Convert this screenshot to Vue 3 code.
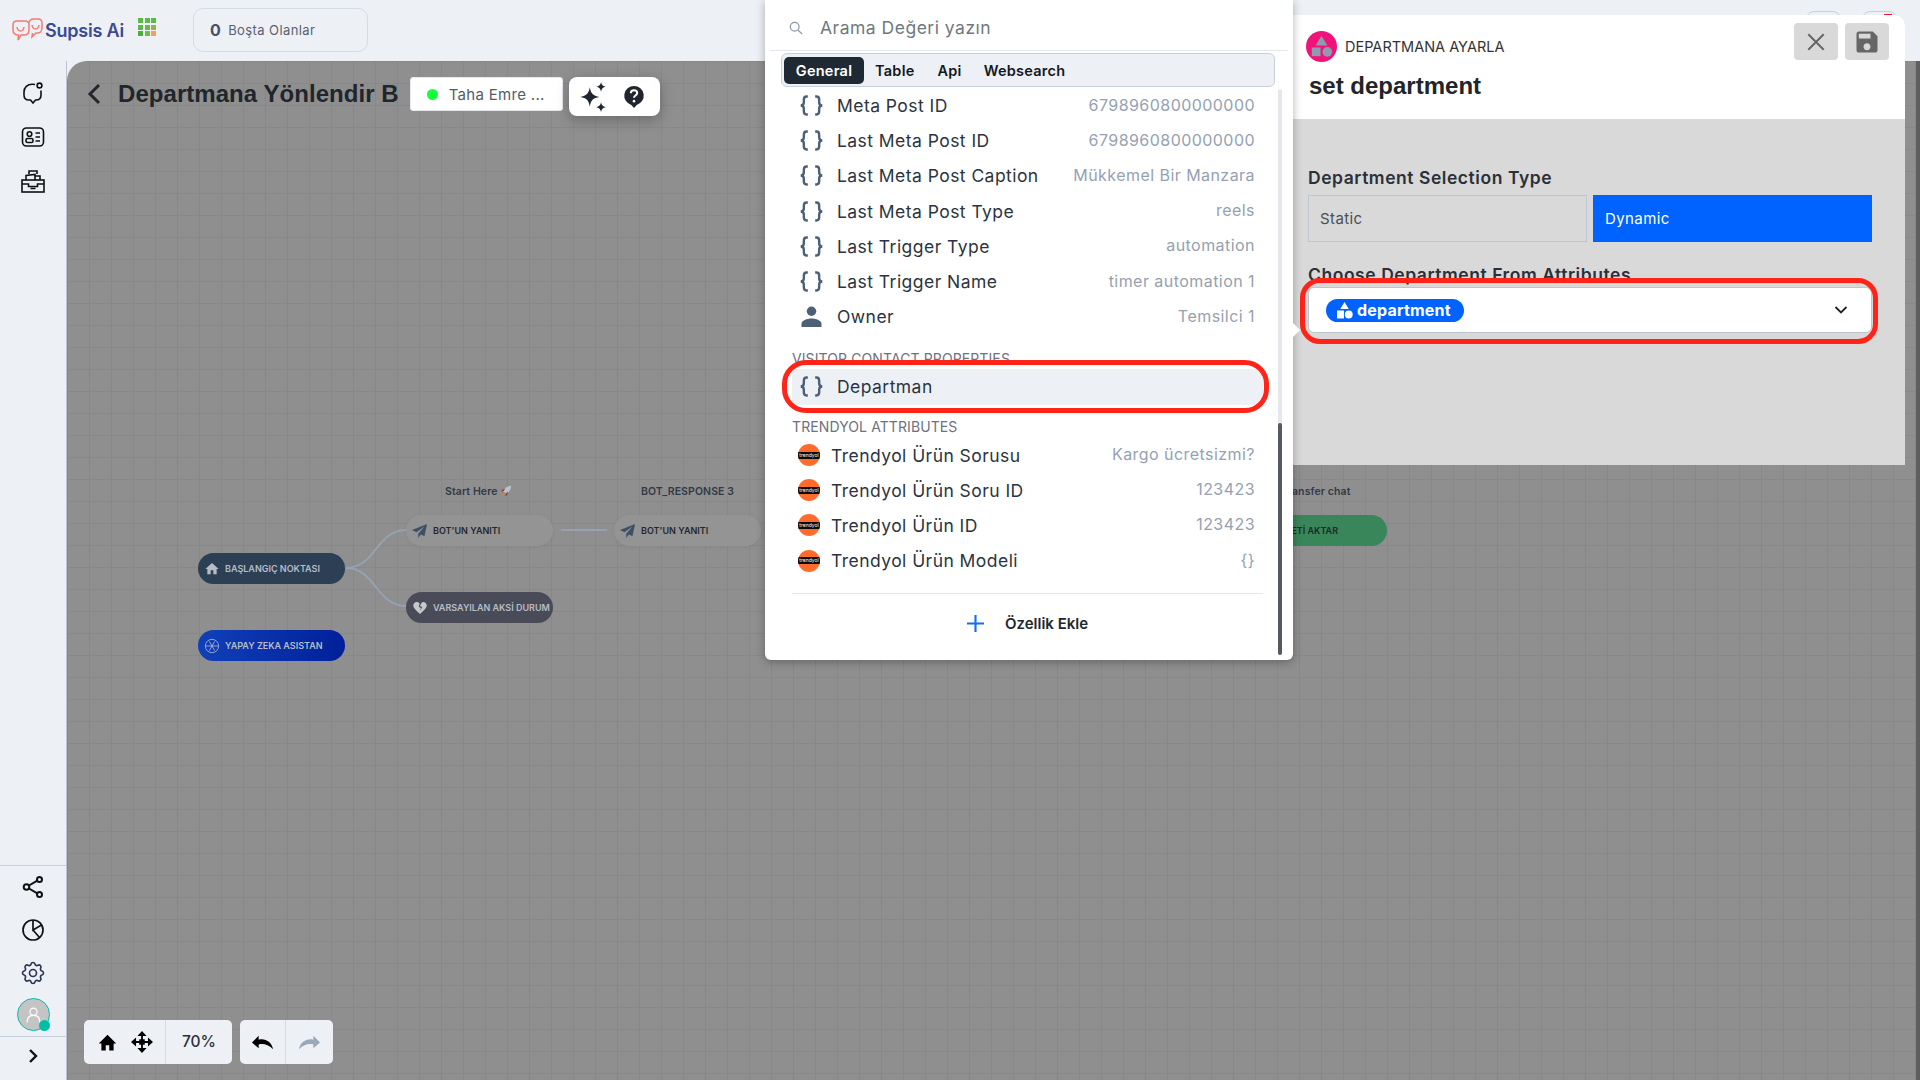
<script setup>
const generalRows = [
  { label: 'Meta Post ID', value: '6798960800000000', icon: 'brace' },
  { label: 'Last Meta Post ID', value: '6798960800000000', icon: 'brace' },
  { label: 'Last Meta Post Caption', value: 'Mükkemel Bir Manzara', icon: 'brace' },
  { label: 'Last Meta Post Type', value: 'reels', icon: 'brace' },
  { label: 'Last Trigger Type', value: 'automation', icon: 'brace' },
  { label: 'Last Trigger Name', value: 'timer automation 1', icon: 'brace' },
  { label: 'Owner', value: 'Temsilci 1', icon: 'person' }
]

const trendyolRows = [
  { label: 'Trendyol Ürün Sorusu', value: 'Kargo ücretsizmi?' },
  { label: 'Trendyol Ürün Soru ID', value: '123423' },
  { label: 'Trendyol Ürün ID', value: '123423' },
  { label: 'Trendyol Ürün Modeli', value: '{}' }
]

const tabs = ['General', 'Table', 'Api', 'Websearch']
const gridColors = ['#5cb848', '#5cb848', '#5cb848', '#5cb848', '#6fb548', '#a8a850', '#4caf3c', '#7fb24a', '#f0a060']
const bracePath = 'M8 1.5H6.800C4.800 1.500 4.200 2.700 4.200 4.500V7c0 1.800-1 3-3 3 2 0 3 1.200 3 3v2.500c0 1.800.6 3 2.600 3H8M15 1.500h1.200c2 0 2.600 1.200 2.600 3V7c0 1.800 1 3 3 3-2 0-3 1.200-3 3v2.500c0 1.800-.6 3-2.600 3H15'
</script>

<template>
  <div class="page">
    <header class="topbar">
      <div class="logo">
        <svg class="logo-mark" viewBox="0 0 31 24" fill="none" stroke="#f57b6f" stroke-width="1.500">
          <path d="M5 3h8c3 0 4 2 4 4v5c0 3-2 5-5 5H9l-3 5 .5-5C3 17 1 15 1 12V7c0-2 1-4 4-4z" />
          <path d="M17 5c0-2 2-4 4-4h5c3 0 4 2 4 4v5c0 3-2 5-4.500 5H24l-4 4 .5-4" />
          <path d="M5 9c.5 3 2 4 3.500 4s3-1 3.500-4M20 7c.5 3 2 4 3.500 4s3-1 3.500-4" />
        </svg>
        <span class="logo-text">Supsis Ai</span>
        <div class="logo-grid">
          <i v-for="(c, i) in gridColors" :key="i" :style="{ background: c }"></i>
        </div>
      </div>
      <div class="idle-box"><b>0</b><span>Boşta Olanlar</span></div>
      <div class="top-right">
        <span class="peek"></span>
        <span class="peek"><i></i></span>
      </div>
    </header>

    <div class="main">
      <aside class="sidebar">
        <div class="side-group">
          <svg class="side-icon" viewBox="0 0 24 24" fill="none" stroke="#111" stroke-width="1.600">
            <path d="M14 3.500c-1-.3-1.500-.3-3-.3C6.500 3.200 3 6.500 3 11v3c0 3 2 5 5 5h1.500l2.500 3 2.500-3h.5c3 0 5-2 5-5V9.500" />
            <circle cx="18.500" cy="4.500" r="2.400" />
          </svg>
          <svg class="side-icon" viewBox="0 0 24 24" fill="none" stroke="#111" stroke-width="1.600">
            <rect x="1.500" y="3" width="21" height="18" rx="4" />
            <circle cx="8.500" cy="9" r="2.300" />
            <rect x="5" y="13.500" width="7" height="4" rx="1.500" />
            <path d="M14.500 8h4.500M14.500 12h4.500M14.500 16h4.500" />
          </svg>
          <svg class="side-icon" viewBox="0 0 24 24" fill="none" stroke="#111" stroke-width="1.600">
            <rect x="1" y="11" width="22" height="12" />
            <path d="M1 15h6.500v2.500h9V15H23M9.500 19.500h5" />
            <path d="M5 11V6.500l9-1V11M8 5V2h8v3M14 7h5v4" />
          </svg>
        </div>
        <div class="side-bottom">
          <div class="side-tools">
            <svg class="side-icon" viewBox="0 0 24 24" fill="none" stroke="#111" stroke-width="2">
              <circle cx="5.500" cy="12" r="2.800" />
              <circle cx="18.500" cy="4.500" r="2.500" />
              <circle cx="18.500" cy="19.500" r="2.500" />
              <path d="M8 10.500l8.300-4.800M8 13.500l8.300 4.800" />
            </svg>
            <svg class="side-icon" viewBox="0 0 24 24" fill="none" stroke="#111" stroke-width="1.700">
              <circle cx="12" cy="12" r="10" />
              <path d="M12 2v10l8.500-5M12 12l6.500 7.500" />
            </svg>
            <svg class="side-icon gear" viewBox="0 0 24 24" fill="none" stroke="#2b3553" stroke-width="1.400">
              <path d="M10.325 4.317c.426-1.756 2.924-1.756 3.350 0a1.724 1.724 0 002.573 1.066c1.543-.94 3.310.826 2.370 2.370a1.724 1.724 0 001.065 2.572c1.756.426 1.756 2.924 0 3.350a1.724 1.724 0 00-1.066 2.573c.94 1.543-.826 3.310-2.370 2.370a1.724 1.724 0 00-2.572 1.065c-.426 1.756-2.924 1.756-3.350 0a1.724 1.724 0 00-2.573-1.066c-1.543.94-3.310-.826-2.370-2.370a1.724 1.724 0 00-1.065-2.572c-1.756-.426-1.756-2.924 0-3.350a1.724 1.724 0 001.066-2.573c-.94-1.543.826-3.310 2.370-2.370.996.608 2.296.07 2.572-1.065z" />
              <circle cx="12" cy="12" r="3" />
            </svg>
            <div class="avatar">
              <svg viewBox="0 0 24 24" fill="none" stroke="#fff" stroke-width="1.500">
                <circle cx="12" cy="8.500" r="4.500" />
                <path d="M4 22c0-6 3-9 8-9s8 3 8 9" />
              </svg>
              <span class="avatar-dot"></span>
            </div>
          </div>
          <div class="side-expand">
            <svg viewBox="0 0 12 16" fill="none" stroke="#111" stroke-width="2.400"><path d="M3 2l6 6-6 6" /></svg>
          </div>
        </div>
      </aside>

      <section class="canvas">
        <svg class="links" viewBox="0 0 1853 1019" fill="none" stroke="#93a3b3" stroke-width="2">
          <path d="M279 507c30 0 30-38 60-38M279 507c30 0 30 38 60 38M494 469h46" />
        </svg>

        <div class="node-label label-start">Start Here
          <svg viewBox="0 0 14 14" class="rocket">
            <path d="M13 1C9 1 6 3 4 7l3 3c4-2 6-5 6-9z" fill="#b9c2cc" />
            <path d="M4 7L1 8l2-3h3zM7 10l-1 3 3-2V8z" fill="#a33" />
            <path d="M3 9l2 2-3 2z" fill="#c98a2a" />
          </svg>
        </div>
        <div class="node-label label-bot">BOT_RESPONSE 3</div>
        <div class="node-label label-transfer">transfer chat</div>

        <div class="node node-start">
          <svg viewBox="0 0 24 24" fill="#b8bdc5"><path d="M10 20v-6h4v6h5v-8h3L12 3 2 12h3v8z" /></svg>
          <span>BAŞLANGIÇ NOKTASI</span>
        </div>
        <div class="node node-ai">
          <svg viewBox="0 0 24 24" fill="none" stroke="#b4bcd8" stroke-width="1.200">
            <circle cx="12" cy="12" r="10" />
            <path d="M8 5l8 14M16 5L8 19M3 12h18" />
          </svg>
          <span>YAPAY ZEKA ASISTAN</span>
        </div>
        <div class="node node-bot bot-one">
          <svg viewBox="0 0 18 18" fill="#3f5064"><path d="M17 1L0 8l5 2.500L14 4l-7 8v5l3-4 4 2z" /></svg>
          <span>BOT'UN YANITI</span>
        </div>
        <div class="node node-bot bot-two">
          <svg viewBox="0 0 18 18" fill="#3f5064"><path d="M17 1L0 8l5 2.500L14 4l-7 8v5l3-4 4 2z" /></svg>
          <span>BOT'UN YANITI</span>
        </div>
        <div class="node node-default">
          <svg viewBox="0 0 24 24" fill="#c4c7cc"><path d="M12 21C5 15 2 12 2 8c0-3 2.500-5 5-5 2 0 3.500 1 4.500 2.500L10 10l3.500 2-2 5 4-6-3.500-2 1.500-3.500C14.500 4 15.500 3 17 3c2.500 0 5 2 5 5 0 4-3 7-10 13z" /></svg>
          <span>VARSAYILAN AKSİ DURUM</span>
        </div>
        <div class="node node-transfer"><span>SOHBETİ AKTAR</span></div>

        <div class="canvas-head">
          <svg class="back" viewBox="0 0 14 22" fill="none" stroke="#22272e" stroke-width="3"><path d="M12 2L3 11l9 9" /></svg>
          <h1>Departmana Yönlendir B</h1>
          <div class="status"><i></i><span>Taha Emre ...</span></div>
          <div class="actions">
            <svg viewBox="0 0 28 28" fill="#20262d" class="spark">
              <path d="M11 5c1 6 3 8 9 9-6 1-8 3-9 9-1-6-3-8-9-9 6-1 8-3 9-9z" />
              <path d="M21.500 0c.5 2.800 1.700 4 4.500 4.500-2.800.5-4 1.700-4.500 4.500-.5-2.800-1.700-4-4.500-4.500 2.800-.5 4-1.700 4.500-4.500zM21.500 19c.5 2.800 1.700 4 4.500 4.500-2.800.5-4 1.700-4.500 4.500-.5-2.800-1.700-4-4.500-4.500 2.800-.5 4-1.700 4.500-4.500z" />
            </svg>
            <svg viewBox="0 0 24 26" class="help">
              <path d="M12 1a10.500 10.500 0 00-3 20.600L12 25l3-3.400A10.500 10.500 0 0012 1z" fill="#20262d" />
              <path d="M8.500 9c0-2 1.500-3.300 3.500-3.300s3.500 1.300 3.500 3c0 2.500-3.500 2.800-3.500 5" fill="none" stroke="#fff" stroke-width="2.200" />
              <circle cx="12" cy="17.500" r="1.400" fill="#fff" />
            </svg>
          </div>
        </div>

        <div class="canvas-tools">
          <div class="tool-group">
            <div class="tool-icons">
              <svg viewBox="0 0 24 24" fill="#000" class="t-home"><path d="M10 21v-6h4v6h5v-8h3L12 3 2 13h3v8z" /></svg>
              <svg viewBox="0 0 24 24" fill="#000" class="t-move">
                <path d="M12 0l5 5.500H7zM12 24l-5-5.500h10zM0 12l5.500-5v10zM24 12l-5.500 5V7z" />
                <rect x="9" y="9" width="6" height="6" />
                <path d="M11 5h2v14h-2zM5 11h14v2H5z" />
              </svg>
            </div>
            <div class="tool-zoom">70%</div>
          </div>
          <div class="tool-group">
            <div class="tool-cell">
              <svg viewBox="0 0 24 24" fill="#000"><path d="M8 5L1 12l7 6v-4c5-1 10 0 15 5-1-7-8-12-15-10z" /></svg>
            </div>
            <div class="tool-cell last">
              <svg viewBox="0 0 24 24" fill="#9aa8b8"><path d="M16 5l7 7-7 6v-4c-5-1-10 0-15 5 1-7 8-12 15-10z" /></svg>
            </div>
          </div>
        </div>
      </section>
    </div>

    <aside class="panel">
      <div class="panel-head">
        <div class="panel-type">
          <span class="type-badge">
            <svg viewBox="0 0 32 32" fill="#8f9bb0">
              <path d="M16 5l6 10H10z" />
              <rect x="6" y="17" width="9" height="9" />
              <circle cx="22" cy="21.500" r="5" />
            </svg>
          </span>
          <span>DEPARTMANA AYARLA</span>
        </div>
        <div class="panel-btns">
          <button>
            <svg viewBox="0 0 20 20" fill="none" stroke="#666" stroke-width="1.800"><path d="M3 3l14 14M17 3L3 17" /></svg>
          </button>
          <button>
            <svg viewBox="0 0 24 24" fill="#666"><path d="M17 3H5c-1.110 0-2 .9-2 2v14c0 1.100.89 2 2 2h14c1.100 0 2-.9 2-2V7l-4-4zm-5 16c-1.660 0-3-1.340-3-3s1.340-3 3-3 3 1.340 3 3-1.340 3-3 3zm3-10H5V5h10v4z" /></svg>
          </button>
        </div>
        <h2>set department</h2>
      </div>
      <div class="panel-body">
        <div class="field-title">Department Selection Type</div>
        <div class="type-switch">
          <div class="opt">Static</div>
          <div class="opt active">Dynamic</div>
        </div>
        <div class="field-title second">Choose Department From Attributes</div>
        <div class="select">
          <span class="pill">
            <svg viewBox="0 0 16 16" fill="#fff">
              <path d="M8 0l4 6.500H4z" />
              <rect x="1" y="8" width="6.500" height="7.500" />
              <circle cx="12" cy="11.800" r="3.700" />
            </svg>
            department
          </span>
          <svg class="chev" viewBox="0 0 14 10" fill="none" stroke="#222" stroke-width="1.800"><path d="M1.500 2l5.500 5.500L12.500 2" /></svg>
          <span class="ring"></span>
        </div>
      </div>
    </aside>

    <div class="picker">
      <span class="picker-tip"></span>
      <div class="search">
        <svg viewBox="0 0 16 16" fill="none" stroke="#8d99a8" stroke-width="1.500">
          <circle cx="6.500" cy="6.500" r="5" />
          <path d="M10.500 10.500L15 15" />
        </svg>
        <span>Arama Değeri yazın</span>
      </div>
      <div class="tabs">
        <span v-for="(t, i) in tabs" :key="t" class="tab" :class="{ on: i === 0 }">{{ t }}</span>
      </div>
      <div class="picker-body">
        <div class="list">
          <div v-for="r in generalRows" :key="r.label" class="row">
            <svg v-if="r.icon === 'brace'" class="row-icon" viewBox="0 0 23 20" fill="none" stroke="#4d6078" stroke-width="2.300">
              <path :d="bracePath" />
            </svg>
            <svg v-else class="row-icon" viewBox="0 0 23 20" fill="#4d6078">
              <circle cx="11.500" cy="5" r="4.500" />
              <path d="M2 20v-3c0-3 5-5 9.500-5s9.500 2 9.500 5v3z" />
            </svg>
            <span class="row-label">{{ r.label }}</span>
            <span class="row-value">{{ r.value }}</span>
          </div>

          <div class="list-title">VISITOR CONTACT PROPERTIES</div>
          <div class="row row-active">
            <svg class="row-icon" viewBox="0 0 23 20" fill="none" stroke="#4d6078" stroke-width="2.300">
              <path :d="bracePath" />
            </svg>
            <span class="row-label">Departman</span>
            <span class="ring"></span>
          </div>

          <div class="list-title trendyol">TRENDYOL ATTRIBUTES</div>
          <div v-for="r in trendyolRows" :key="r.label" class="row row-ty">
            <span class="ty-logo"><em>trendyol</em></span>
            <span class="row-label">{{ r.label }}</span>
            <span class="row-value">{{ r.value }}</span>
          </div>

          <div class="add-row">
            <svg viewBox="0 0 16 16" fill="none" stroke="#0d6efd" stroke-width="2"><path d="M8 0v16M0 8h16" /></svg>
            <span>Özellik Ekle</span>
          </div>
        </div>
        <div class="scroll"><span></span></div>
      </div>
    </div>
  </div>
</template>

<style>
html, body {
  margin: 0;
  background: #edf1f6;
}
</style>

<style scoped>
* {
  box-sizing: border-box;
}

.page {
  position: relative;
  width: 1920px;
  height: 1080px;
  overflow: hidden;
  background: #edf1f6;
  font-family: Inter, "Open Sans", sans-serif;
  color: #212529;
}

/* ust bar */
.topbar {
  height: 61px;
  display: flex;
  align-items: flex-start;
  padding-left: 12px;
}

.logo {
  display: flex;
  align-items: center;
  width: 181px;
  height: 60px;
}

.logo-mark {
  width: 31px;
  height: 24px;
  flex: none;
}

.logo-text {
  margin-left: 2px;
  font-size: 18px;
  font-weight: 600;
  letter-spacing: -0.2px;
  color: #3b4a93;
  white-space: nowrap;
}

.logo-grid {
  margin: -6px 0 0 14px;
  display: grid;
  grid-template-columns: repeat(3, 5px);
  gap: 1.500px;
}

.logo-grid i {
  height: 5px;
}

.idle-box {
  margin-top: 8px;
  width: 175px;
  height: 44px;
  border: 1px solid #d5dbe2;
  border-radius: 10px;
  display: flex;
  align-items: center;
  padding-left: 16px;
  gap: 7px;
  font-size: 13px;
  letter-spacing: 0.4px;
  color: #5a6070;
}

.idle-box b {
  font-size: 16px;
  color: #4a5064;
}

.top-right {
  margin: 11px 23px 0 auto;
  display: flex;
  gap: 21px;
}

.peek {
  position: relative;
  width: 35px;
  height: 20px;
  border: 1px solid #c5d0dc;
  border-radius: 8px;
}

.peek i {
  position: absolute;
  right: 4px;
  top: 2px;
  width: 8px;
  height: 3px;
  background: #f0142a;
}

.main {
  display: flex;
  height: 1019px;
}

/* sol menu */
.sidebar {
  width: 67px;
  flex: none;
  border-right: 1px solid #b9c4d0;
  display: flex;
  flex-direction: column;
  justify-content: space-between;
}

.side-group {
  padding-top: 20px;
  display: flex;
  flex-direction: column;
  align-items: center;
  gap: 20px;
}

.side-icon {
  width: 24px;
  height: 24px;
  flex: none;
}

.side-icon.gear {
  width: 28px;
  height: 28px;
  margin: -2px 0;
}

.side-bottom {
  display: flex;
  flex-direction: column;
}

.side-tools {
  height: 172px;
  border-top: 1px solid #c5d0dc;
  border-bottom: 1px solid #c5d0dc;
  padding-top: 9px;
  display: flex;
  flex-direction: column;
  align-items: center;
  gap: 19px;
}

.avatar {
  position: relative;
  width: 33px;
  height: 33px;
  margin-top: -6px;
  border-radius: 50%;
  border: 1px solid #00bfa8;
  background: #c4c4c4;
  display: flex;
  align-items: center;
  justify-content: center;
}

.avatar svg {
  width: 19px;
  height: 19px;
}

.avatar-dot {
  position: absolute;
  right: -1px;
  bottom: -1px;
  width: 11px;
  height: 11px;
  border-radius: 50%;
  background: #00bfa8;
}

.side-expand {
  height: 43px;
  display: flex;
  align-items: center;
  justify-content: center;
  padding-bottom: 5px;
}

.side-expand svg {
  width: 12px;
  height: 16px;
}

/* akis alani */
.canvas {
  position: relative;
  flex: 1;
  border-radius: 20px 0 0 0;
  overflow: hidden;
  background-color: #8f8f8f;
  background-image:
    linear-gradient(#888 1px, transparent 1px),
    linear-gradient(90deg, #888 1px, transparent 1px);
  background-size: 22px 22px;
}

/* sag kenardaki koyu serit */
.canvas::after {
  content: "";
  position: absolute;
  top: 0;
  right: 0;
  bottom: 0;
  width: 4px;
  background: #5e5e5e;
}

.links {
  position: absolute;
  inset: 0;
  width: 100%;
  height: 100%;
}

.canvas-head {
  position: absolute;
  top: 16px;
  left: 20px;
  display: flex;
  align-items: flex-start;
}

.back {
  width: 14px;
  height: 22px;
  margin-top: 6px;
}

.canvas-head h1 {
  margin: 0 11px 0 17px;
  font-family: "Liberation Sans", Arial, sans-serif;
  font-size: 24px;
  line-height: 34px;
  font-weight: 700;
  letter-spacing: 0.05px;
  color: #21262c;
  white-space: nowrap;
}

.status {
  width: 153px;
  height: 34px;
  background: #fff;
  border: 1px solid #e4e7eb;
  border-radius: 3px;
  display: flex;
  align-items: center;
  padding-left: 16px;
  gap: 11px;
  font-size: 15px;
  letter-spacing: 0.3px;
  color: #555c66;
}

.status i {
  width: 11px;
  height: 11px;
  border-radius: 50%;
  background: #12ff3a;
}

.actions {
  margin-left: 6px;
  width: 91px;
  height: 39px;
  background: #fff;
  border-radius: 8px;
  box-shadow: 0 4px 14px rgba(0, 0, 0, 0.25);
  display: flex;
  align-items: center;
  padding-left: 9px;
  gap: 15px;
}

.spark {
  width: 30px;
  height: 30px;
}

.help {
  width: 22px;
  height: 24px;
}

.canvas-tools {
  position: absolute;
  left: 17px;
  bottom: 16px;
  display: flex;
  gap: 8px;
}

.tool-group {
  display: flex;
  height: 44px;
  background: #edf1f6;
  border-radius: 5px;
}

.tool-icons {
  width: 82px;
  display: flex;
  align-items: center;
  padding-left: 13px;
  gap: 13px;
  border-right: 1px solid #d3dae2;
}

.t-home {
  width: 21px;
  height: 21px;
}

.t-move {
  width: 22px;
  height: 22px;
}

.tool-zoom {
  width: 66px;
  text-align: center;
  line-height: 44px;
  font-size: 15.500px;
  font-weight: 500;
  color: #2b3038;
}

.tool-cell {
  width: 46px;
  display: flex;
  align-items: center;
  justify-content: center;
  border-right: 1px solid #d3dae2;
}

.tool-cell.last {
  border-right: 0;
  width: 47px;
}

.tool-cell svg {
  width: 23px;
  height: 23px;
}

/* dugumler, serbest tuval */
.node {
  position: absolute;
  width: 147px;
  height: 31px;
  border-radius: 16px;
  display: flex;
  align-items: center;
  padding-left: 6px;
  gap: 5px;
  font-size: 9px;
  font-weight: 600;
  white-space: nowrap;
  color: #b8bdc5;
}

.node svg {
  width: 16px;
  height: 16px;
  flex: none;
}

.node-start {
  left: 131px;
  top: 492px;
  background: #2d3f55;
}

.node-ai {
  left: 131px;
  top: 569px;
  background: linear-gradient(90deg, #1040b8, #00209a);
}

.node-bot {
  top: 454px;
  background: #949494;
  color: #23282f;
  box-shadow: 0 1px 4px rgba(0, 0, 0, 0.06);
}

.bot-one {
  left: 339px;
}

.bot-two {
  left: 547px;
}

.node-default {
  left: 339px;
  top: 531px;
  background: #4a4b58;
}

.node-transfer {
  left: 1173px;
  top: 454px;
  background: #38865a;
  color: #1d2a24;
  justify-content: flex-end;
  padding-right: 49px;
}

.node-label {
  position: absolute;
  top: 424px;
  font-size: 10.500px;
  line-height: 14px;
  font-weight: 600;
  letter-spacing: 0.1px;
  color: #323a46;
  white-space: nowrap;
}

.rocket {
  width: 12px;
  height: 12px;
  vertical-align: -2px;
}

.label-start {
  left: 378px;
}

.label-bot {
  left: 574px;
}

.label-transfer {
  left: 1217px;
}

/* sag panel */
.panel {
  position: absolute;
  left: 1293px;
  top: 15px;
  width: 612px;
  height: 450px;
  border-radius: 0 10px 0 0;
  background: #d9d9d9;
}

.panel-head {
  position: relative;
  height: 104px;
  background: #fff;
  border-radius: 0 10px 0 0;
  padding: 16px 0 0 13px;
}

.panel-type {
  display: flex;
  align-items: center;
  gap: 8px;
  font-size: 14.500px;
  color: #333;
}

.type-badge {
  width: 31px;
  height: 31px;
  border-radius: 50%;
  background: #f0147a;
  display: flex;
}

.panel-btns {
  position: absolute;
  top: 8px;
  left: 501px;
  display: flex;
  gap: 7px;
}

.panel-btns button {
  width: 44px;
  height: 37px;
  padding: 0;
  border: 0;
  border-radius: 4px;
  background: #d9d9d9;
  display: flex;
  align-items: center;
  justify-content: center;
}

.panel-btns button svg {
  width: 28px;
  height: 28px;
}

.panel-btns button:first-child svg {
  width: 22px;
  height: 22px;
}

.panel-head h2 {
  margin: 9px 0 0 3px;
  font-family: "Liberation Sans", Arial, sans-serif;
  font-size: 24px;
  line-height: 30px;
  font-weight: 700;
  color: #212529;
}

.panel-body {
  padding: 47px 33px 0 15px;
}

.field-title {
  font-size: 17.500px;
  line-height: 24px;
  font-weight: 600;
  letter-spacing: 0.55px;
  color: #2b3038;
  white-space: nowrap;
}

.field-title.second {
  margin-top: 21px;
}

.type-switch {
  margin-top: 5px;
  display: flex;
  gap: 6px;
}

.opt {
  flex: 1;
  height: 47px;
  border: 1px solid #bcc5d0;
  padding-left: 11px;
  font-size: 15px;
  line-height: 45px;
  letter-spacing: 0.4px;
  color: #4a4f57;
}

.opt.active {
  background: #0062ff;
  border-color: #0062ff;
  color: #fff;
}

.select {
  position: relative;
  height: 46px;
  border: 1px solid #bcc5d0;
  border-radius: 6px;
  background: #fff;
  display: flex;
  align-items: center;
  justify-content: space-between;
  padding: 0 23px 0 17px;
}

.pill {
  height: 23px;
  width: 138px;
  border-radius: 12px;
  background: #0062ff;
  color: #fff;
  font-size: 16px;
  font-weight: 700;
  letter-spacing: 0.2px;
  display: flex;
  align-items: center;
  gap: 4px;
  padding-left: 10px;
  white-space: nowrap;
}

.pill svg {
  width: 17px;
  height: 17px;
  flex: none;
}

.chev {
  width: 14px;
  height: 10px;
}

.ring {
  position: absolute;
  border: 5px solid #ff2318;
  pointer-events: none;
}

.select .ring {
  inset: -10px -7px -12px -9px;
  border-radius: 20px;
}

/* ozellik secici */
.picker {
  position: absolute;
  left: 765px;
  top: 0;
  width: 528px;
  height: 660px;
  background: #fff;
  border-radius: 0 0 6px 6px;
  box-shadow: 0 2px 10px rgba(0, 0, 0, 0.3);
  padding: 0 5px;
}

.picker-tip {
  position: absolute;
  right: -5px;
  top: 325px;
  width: 10px;
  height: 10px;
  background: #fff;
  transform: rotate(45deg);
}

.search {
  height: 51px;
  border-bottom: 1px solid #e3e8ef;
  display: flex;
  align-items: center;
  padding: 5px 0 0 19px;
  gap: 17px;
  font-size: 17.500px;
  letter-spacing: 0.5px;
  color: #70787f;
}

.search svg {
  width: 14px;
  height: 14px;
}

.tabs {
  margin: 2px 13px 0 11px;
  height: 34px;
  background: #edf1f6;
  border: 1px solid #c5d0dc;
  border-radius: 6px;
  display: flex;
  align-items: center;
  padding: 0 2px;
  gap: 1px;
  font-size: 14.500px;
  font-weight: 600;
  letter-spacing: 0.25px;
  color: #15191e;
}

.tab {
  height: 27px;
  line-height: 27px;
  padding: 0 10px;
  border-radius: 5px;
}

.tab:nth-child(3) {
  padding: 0 11px 0 12px;
}

.tab.on {
  width: 80px;
  text-align: center;
  padding: 0;
  background: #1f2933;
  color: #fff;
}

.picker-body {
  position: relative;
  padding: 1px 25px 0 22px;
}

.list {
  display: flex;
  flex-direction: column;
}

.row {
  position: relative;
  height: 35.200px;
  display: flex;
  align-items: center;
  padding: 0 8px;
  font-size: 17.500px;
  letter-spacing: 0.45px;
  white-space: nowrap;
}

.row-icon {
  width: 25px;
  height: 21px;
  margin: 0 -1px;
  flex: none;
}

.row-label {
  margin-left: 14px;
  color: #2b3440;
}

.row-value {
  margin-left: auto;
  margin-bottom: 2px;
  font-size: 16px;
  letter-spacing: 0.45px;
  color: #95a1b2;
}

.row-active {
  background: #edf1f6;
}

.row-active .ring {
  inset: -9px -6px -8px -10px;
  border-radius: 24px;
}

.row-ty {
  padding-left: 6px;
}

.ty-logo {
  position: relative;
  width: 22px;
  height: 22px;
  border-radius: 50%;
  background: #ff6b2d;
  flex: none;
  display: flex;
  align-items: center;
  justify-content: center;
  overflow: hidden;
}

.ty-logo em {
  width: 100%;
  height: 7px;
  background: #0b0b0b;
  color: #fff;
  font-style: normal;
  font-size: 5px;
  line-height: 7px;
  letter-spacing: 0;
  text-align: center;
}

.row-ty .row-label {
  margin-left: 11px;
}

.list-title {
  margin-top: 14px;
  height: 21px;
  line-height: 21px;
  font-size: 14px;
  letter-spacing: 0.1px;
  color: #6b7280;
  white-space: nowrap;
}

.list-title.trendyol {
  margin-top: 11px;
  margin-bottom: 1px;
}

.add-row {
  margin-top: 15px;
  height: 60px;
  border-top: 1px solid #e3e6ea;
  display: flex;
  align-items: center;
  justify-content: center;
  gap: 21px;
  font-size: 15px;
  font-weight: 600;
  color: #22272e;
}

.add-row svg {
  width: 17px;
  height: 17px;
}

.scroll {
  position: absolute;
  left: 508px;
  top: 2px;
  width: 4px;
  height: 566px;
  background: #e5e7ea;
  border-radius: 2px;
}

.scroll span {
  position: absolute;
  left: 0;
  right: 0;
  bottom: 0;
  height: 232px;
  background: #555a60;
  border-radius: 2px;
}
</style>
